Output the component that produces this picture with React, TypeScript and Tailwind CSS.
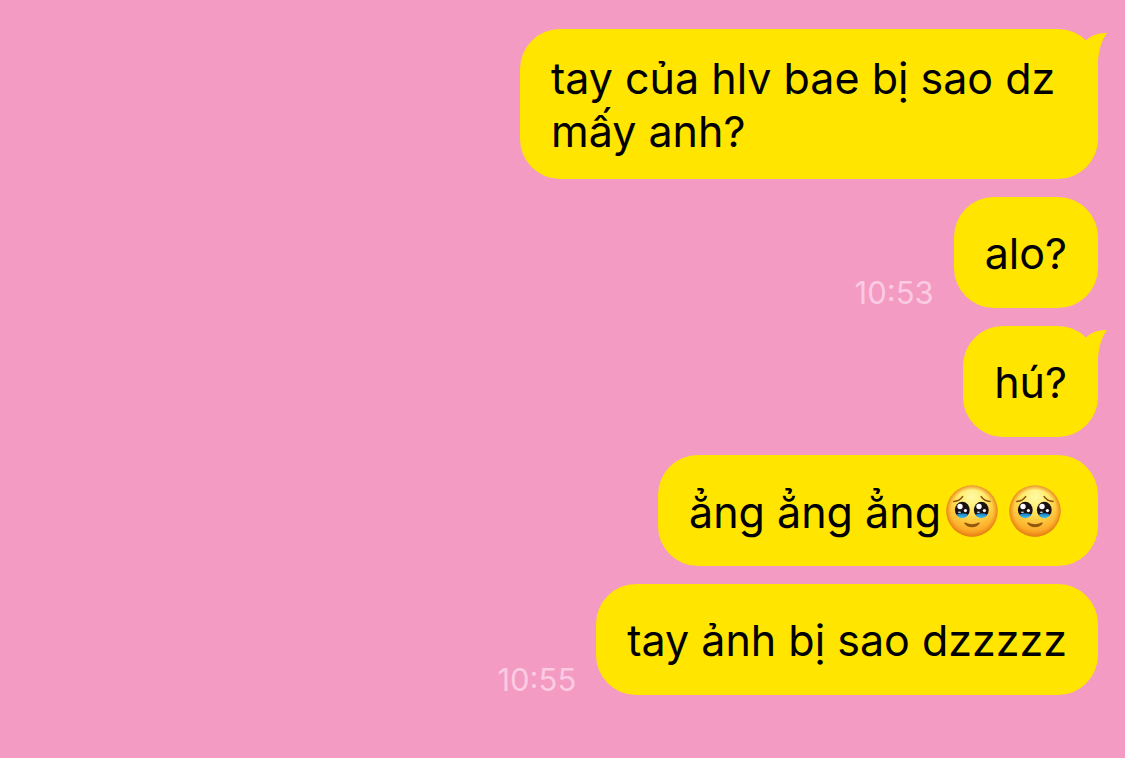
import type { ReactNode } from "react";

type Message = {
  id: number;
  content: ReactNode;
  time?: string;
  tail?: boolean;
};

function TearyFace({ id }: { id: string }) {
  return (
    <svg
      viewBox="0 0 52 52"
      className="mr-[6px] ml-[5px] inline-block size-[52px] align-[-9px]"
      role="img"
      aria-label="face holding back tears"
    >
      <defs>
        <radialGradient id={`${id}-face`} cx="26" cy="12" r="40" gradientUnits="userSpaceOnUse">
          <stop offset="0" stopColor="#fffaa8" />
          <stop offset="0.3" stopColor="#ffec70" />
          <stop offset="0.55" stopColor="#ffd044" />
          <stop offset="0.8" stopColor="#fcb02c" />
          <stop offset="1" stopColor="#f28c18" />
        </radialGradient>
        <radialGradient id={`${id}-rim`} cx="26" cy="26" r="26" gradientUnits="userSpaceOnUse">
          <stop offset="0.8" stopColor="#ee8a15" stopOpacity="0" />
          <stop offset="1" stopColor="#e27a10" stopOpacity="0.85" />
        </radialGradient>
        <linearGradient id={`${id}-tear`} x1="0" y1="0" x2="0" y2="1">
          <stop offset="0" stopColor="#1678bd" />
          <stop offset="0.5" stopColor="#35b0e6" />
          <stop offset="1" stopColor="#7ccfe8" />
        </linearGradient>
        <clipPath id={`${id}-left`}>
          <ellipse cx="16.3" cy="25" rx="7.4" ry="8.2" />
        </clipPath>
        <clipPath id={`${id}-right`}>
          <ellipse cx="35.3" cy="25" rx="7.4" ry="8.2" />
        </clipPath>
      </defs>
      <circle cx="26" cy="26" r="25.7" fill={`url(#${id}-face)`} />
      <circle cx="26" cy="26" r="25.7" fill={`url(#${id}-rim)`} />
      <path
        d="M7.800 16.500c3.200-.3 6.800-2 8.800-4.900M44 16.500c-3.200-.3-6.800-2-8.800-4.900"
        fill="none"
        stroke="#8c4f0c"
        strokeWidth="1.6"
        strokeLinecap="round"
      />
      <g clipPath={`url(#${id}-left)`}>
        <circle cx="16.3" cy="24" r="8.5" fill="#1b1110" />
        <ellipse cx="16.3" cy="31.8" rx="7" ry="3.6" fill={`url(#${id}-tear)`} />
        <circle cx="14" cy="21.5" r="2.7" fill="#fff" />
        <circle cx="19.4" cy="25.6" r="1.6" fill="#fff" />
        <ellipse cx="13.4" cy="27.3" rx="1.6" ry="0.8" fill="#b9d9e5" />
      </g>
      <g clipPath={`url(#${id}-right)`}>
        <circle cx="35.3" cy="24" r="8.5" fill="#1b1110" />
        <ellipse cx="35.3" cy="31.8" rx="7" ry="3.6" fill={`url(#${id}-tear)`} />
        <circle cx="33" cy="21.500" r="2.7" fill="#fff" />
        <circle cx="38.4" cy="25.6" r="1.6" fill="#fff" />
        <ellipse cx="32.4" cy="27.3" rx="1.6" ry="0.8" fill="#b9d9e5" />
      </g>
      <path
        d="M19.500 37.600c2 1.200 4.300 1.700 6.500 1.700s4.500-.5 6.500-1.700c.9-.4 1.500.2 1.100 1-1.300 2.300-4.300 3.700-7.600 3.700s-6.300-1.400-7.600-3.700c-.4-.8.2-1.400 1.100-1Z"
        fill="#94560d"
      />
    </svg>
  );
}

function BubbleTail() {
  return (
    <svg
      viewBox="0 0 28 42"
      className="absolute top-0 -right-[10px] h-[42px] w-[28px]"
      fill="#ffe500"
      aria-hidden
    >
      <path d="M6 11.500C10 7.500 17 3.500 27 4c-4.500 6-8 15-9 28v10H0V12Z" />
    </svg>
  );
}

const messages: Message[] = [
  { id: 1, content: "tay của hlv bae bị sao dz mấy anh?", tail: true },
  { id: 2, content: "alo?", time: "10:53" },
  { id: 3, content: "hú?", tail: true },
  {
    id: 4,
    content: (
      <>
        ẳng ẳng ẳng
        <TearyFace id="first" />
        <TearyFace id="second" />
      </>
    ),
  },
  { id: 5, content: "tay ảnh bị sao dzzzzz", time: "10:55" },
];

function MessageRow({ message }: { message: Message }) {
  return (
    <li className="flex items-end justify-end gap-5">
      {message.time && (
        <time className="text-[31px] leading-[30px] text-[#fbcbe3]">{message.time}</time>
      )}
      <div className="relative flex min-h-[111px] max-w-[578px] items-center rounded-[40px] bg-[#ffe500] px-[31px] pt-[23px] pb-[21px]">
        <p className="text-[43px] leading-[53px] text-black">{message.content}</p>
        {message.tail && <BubbleTail />}
      </div>
    </li>
  );
}

export default function App() {
  return (
    <main className="min-h-screen bg-[#f39bc2] pt-[29px] pr-[27px] pb-16 pl-6 font-['Inter',sans-serif]">
      <ul className="flex flex-col gap-[18px]">
        {messages.map((message) => (
          <MessageRow key={message.id} message={message} />
        ))}
      </ul>
    </main>
  );
}
